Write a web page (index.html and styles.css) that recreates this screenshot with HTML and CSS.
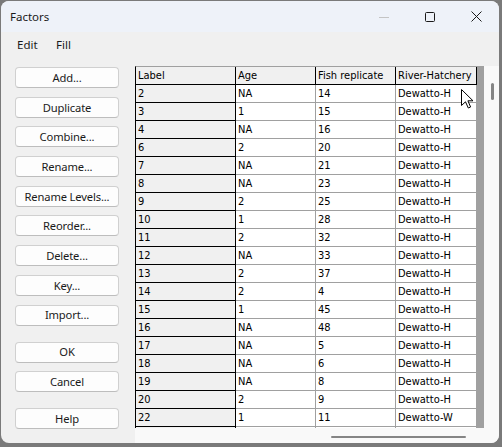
FILE: index.html
```html
<!DOCTYPE html>
<html>
<head>
<meta charset="utf-8">
<title>Factors</title>
<link rel="stylesheet" href="styles.css">
</head>
<body>
<div class="window">
  <div class="titlebar">
    <span class="title">Factors</span>
    <div class="controls">
      <div class="ctl"><svg width="10" height="10" viewBox="0 0 10 10"><line x1="0" y1="5.5" x2="10" y2="5.5" stroke="#c4c4c4" stroke-width="1"/></svg></div>
      <div class="ctl"><svg width="10" height="10" viewBox="0 0 10 10"><rect x="0.5" y="0.5" width="9" height="9" rx="1" fill="none" stroke="#1a1a1a" stroke-width="1"/></svg></div>
      <div class="ctl"><svg width="11" height="11" viewBox="0 0 11 11"><path d="M0.5 0.5 L10.5 10.5 M10.5 0.5 L0.5 10.5" stroke="#1a1a1a" stroke-width="1"/></svg></div>
    </div>
  </div>
  <div class="menubar">
    <span class="menu menu-edit">Edit</span>
    <span class="menu">Fill</span>
  </div>
  <div class="content">
    <div class="buttons">
      <div class="group">
        <div class="btn">Add...</div>
        <div class="btn">Duplicate</div>
        <div class="btn">Combine...</div>
        <div class="btn">Rename...</div>
        <div class="btn">Rename Levels...</div>
        <div class="btn">Reorder...</div>
        <div class="btn">Delete...</div>
        <div class="btn">Key...</div>
        <div class="btn">Import...</div>
      </div>
      <div class="group">
        <div class="btn">OK</div>
        <div class="btn">Cancel</div>
      </div>
      <div class="group">
        <div class="btn">Help</div>
      </div>
    </div>
    <div class="grid">
      <div class="viewport">
        <div class="sheet">
          <div class="row head">
            <div class="cell c1">Label</div><div class="cell c2">Age</div><div class="cell c3">Fish replicate</div><div class="cell c4">River-Hatchery</div>
          </div>
          <div class="row"><div class="cell c1">2</div><div class="cell c2">NA</div><div class="cell c3">14</div><div class="cell c4">Dewatto-H</div></div>
          <div class="row"><div class="cell c1">3</div><div class="cell c2">1</div><div class="cell c3">15</div><div class="cell c4">Dewatto-H</div></div>
          <div class="row"><div class="cell c1">4</div><div class="cell c2">NA</div><div class="cell c3">16</div><div class="cell c4">Dewatto-H</div></div>
          <div class="row"><div class="cell c1">6</div><div class="cell c2">2</div><div class="cell c3">20</div><div class="cell c4">Dewatto-H</div></div>
          <div class="row"><div class="cell c1">7</div><div class="cell c2">NA</div><div class="cell c3">21</div><div class="cell c4">Dewatto-H</div></div>
          <div class="row"><div class="cell c1">8</div><div class="cell c2">NA</div><div class="cell c3">23</div><div class="cell c4">Dewatto-H</div></div>
          <div class="row"><div class="cell c1">9</div><div class="cell c2">2</div><div class="cell c3">25</div><div class="cell c4">Dewatto-H</div></div>
          <div class="row"><div class="cell c1">10</div><div class="cell c2">1</div><div class="cell c3">28</div><div class="cell c4">Dewatto-H</div></div>
          <div class="row"><div class="cell c1">11</div><div class="cell c2">2</div><div class="cell c3">32</div><div class="cell c4">Dewatto-H</div></div>
          <div class="row"><div class="cell c1">12</div><div class="cell c2">NA</div><div class="cell c3">33</div><div class="cell c4">Dewatto-H</div></div>
          <div class="row"><div class="cell c1">13</div><div class="cell c2">2</div><div class="cell c3">37</div><div class="cell c4">Dewatto-H</div></div>
          <div class="row"><div class="cell c1">14</div><div class="cell c2">2</div><div class="cell c3">4</div><div class="cell c4">Dewatto-H</div></div>
          <div class="row"><div class="cell c1">15</div><div class="cell c2">1</div><div class="cell c3">45</div><div class="cell c4">Dewatto-H</div></div>
          <div class="row"><div class="cell c1">16</div><div class="cell c2">NA</div><div class="cell c3">48</div><div class="cell c4">Dewatto-H</div></div>
          <div class="row"><div class="cell c1">17</div><div class="cell c2">NA</div><div class="cell c3">5</div><div class="cell c4">Dewatto-H</div></div>
          <div class="row"><div class="cell c1">18</div><div class="cell c2">NA</div><div class="cell c3">6</div><div class="cell c4">Dewatto-H</div></div>
          <div class="row"><div class="cell c1">19</div><div class="cell c2">NA</div><div class="cell c3">8</div><div class="cell c4">Dewatto-H</div></div>
          <div class="row"><div class="cell c1">20</div><div class="cell c2">2</div><div class="cell c3">9</div><div class="cell c4">Dewatto-H</div></div>
          <div class="row"><div class="cell c1">22</div><div class="cell c2">1</div><div class="cell c3">11</div><div class="cell c4">Dewatto-W</div></div>
          <div class="row"><div class="cell c1"></div><div class="cell c2"></div><div class="cell c3"></div><div class="cell c4"></div></div>
        </div>
      </div>
      <div class="vscroll"><div class="vthumb"></div></div>
      <div class="hscroll"><div class="hthumb"></div></div>
      <div class="corner"></div>
    </div>
  </div>
  <svg class="cursor" width="13" height="20" viewBox="0 0 13 20"><path d="M0.5 0.5 L0.5 16.5 L4.5 12.8 L7.3 19 L9.6 18 L6.9 11.8 L12 11.8 Z" fill="#fff" stroke="#000" stroke-width="1" stroke-linejoin="miter"/></svg>
</div>
</body>
</html>
```
FILE: styles.css
```css
html, body {
  margin: 0;
  padding: 0;
}
body {
  background: #7a7a7a;
  width: 502px;
  height: 447px;
  overflow: hidden;
}
.window {
  position: relative;
  width: 498px;
  height: 442px;
  margin: 1px 0 0 1px;
  border-radius: 8px;
  overflow: hidden;
  background: #f0f0f0;
  display: flex;
  flex-direction: column;
  font-family: "Noto Sans", "Open Sans", sans-serif;
  font-size: 12px;
  color: #1a1a1a;
}
.titlebar {
  height: 31px;
  flex: none;
  background: #eef2f9;
  display: flex;
  align-items: center;
  padding-left: 9px;
}
.title {
  flex: 1;
  font-size: 11.5px;
}
.controls {
  display: flex;
  height: 31px;
}
.ctl {
  width: 46px;
  display: flex;
  align-items: center;
  justify-content: center;
}
.menubar {
  height: 24px;
  flex: none;
  display: flex;
  align-items: center;
  padding-left: 16px;
  font-size: 11.5px;
}
.menu-edit {
  width: 39px;
}
.content {
  flex: 1;
  display: flex;
  min-height: 0;
}
.buttons {
  flex: none;
  width: 104px;
  padding: 11px 0 0 14px;
  display: flex;
  flex-direction: column;
  gap: 16px;
}
.group {
  display: flex;
  flex-direction: column;
  gap: 8.7px;
}
.btn {
  box-sizing: border-box;
  height: 21px;
  border: 1px solid #d0d0d0;
  border-bottom-color: #bdbdbd;
  border-radius: 4px;
  background: #fdfdfd;
  display: flex;
  align-items: center;
  justify-content: center;
  line-height: 1;
  font-size: 11.2px;
  letter-spacing: -0.15px;
}
.grid {
  flex: 1;
  margin: 10px 0 0 16px;
  display: grid;
  grid-template-columns: 1fr 15px;
  grid-template-rows: 1fr 15px;
  background: #f9f9f9;
  min-height: 0;
}
.viewport {
  background: #a0a0a0;
  overflow: hidden;
  min-height: 0;
}
.sheet {
  width: fit-content;
  border-left: 1px solid #000;
  border-top: 1px solid #a0a0a0;
  font-family: "DejaVu Sans Condensed", "DejaVu Sans", sans-serif;
  font-stretch: semi-condensed;
  font-size: 11px;
  color: #000;
}
.row {
  display: flex;
}
.cell {
  box-sizing: border-box;
  height: 18px;
  line-height: 17px;
  padding-left: 2px;
  white-space: nowrap;
  overflow: hidden;
  background: #fff;
  border-right: 1px solid #a0a0a0;
  border-bottom: 1px solid #a0a0a0;
}
.c1 { width: 100px; background: #f0f0f0; border-color: #000; }
.c2 { width: 80px; }
.c3 { width: 80px; }
.c4 { width: 81px; }
.head .cell {
  background: #f0f0f0;
  border-color: #000;
}
.vscroll {
  position: relative;
}
.vthumb {
  margin: 17px 0 0 7px;
  width: 3px;
  height: 17px;
  border-radius: 2px;
  background: #858585;
}
.hscroll {
  position: relative;
}
.hthumb {
  margin: 8px 0 0 196px;
  width: 135px;
  height: 2px;
  border-radius: 2px;
  background: #858585;
}
.cursor {
  position: absolute;
  left: 460px;
  top: 88px;
}
```
